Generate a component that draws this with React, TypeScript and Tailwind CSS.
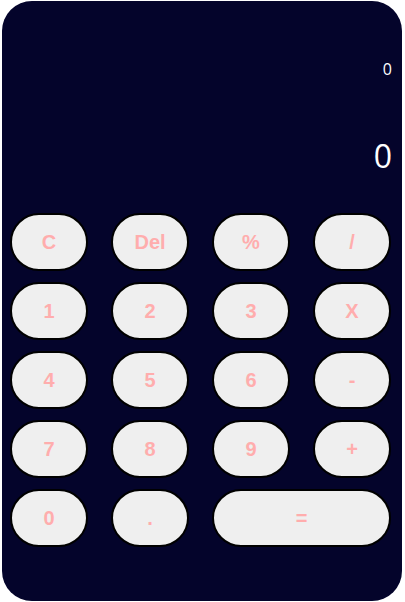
import { useState } from "react";

const keys: { label: string; wide?: boolean }[] = [
  { label: "C" },
  { label: "Del" },
  { label: "%" },
  { label: "/" },
  { label: "1" },
  { label: "2" },
  { label: "3" },
  { label: "X" },
  { label: "4" },
  { label: "5" },
  { label: "6" },
  { label: "-" },
  { label: "7" },
  { label: "8" },
  { label: "9" },
  { label: "+" },
  { label: "0" },
  { label: "." },
  { label: "=", wide: true },
];

export default function App() {
  const [expr] = useState("0");
  const [result] = useState("0");

  return (
    <div className="pl-[2px] pt-[1px]">
      <div className="w-[400px] h-[600px] rounded-[30px] bg-[#04042b] flex flex-col">
        <div
          className="h-[204px] flex flex-col items-end pr-[10px] text-white"
          style={{ fontFamily: '"Open Sans", sans-serif' }}
        >
          <div className="mt-[56px] text-[16px] leading-[24px]">{expr}</div>
          <div className="mt-[53px] text-[32px] leading-[44px]">{result}</div>
        </div>
        <div className="mt-[8px] ml-[8px] grid grid-cols-[repeat(4,78px)] auto-rows-[58px] gap-x-[23px] gap-y-[11px]">
          {keys.map((k) => (
            <button
              key={k.label}
              className={`rounded-full border-2 border-black bg-[#efefef] text-[#ffadad] text-[20px] font-bold ${
                k.wide ? "col-span-2" : ""
              }`}
              style={{ fontFamily: '"Liberation Sans", Arial, sans-serif' }}
            >
              {k.label}
            </button>
          ))}
        </div>
      </div>
    </div>
  );
}
